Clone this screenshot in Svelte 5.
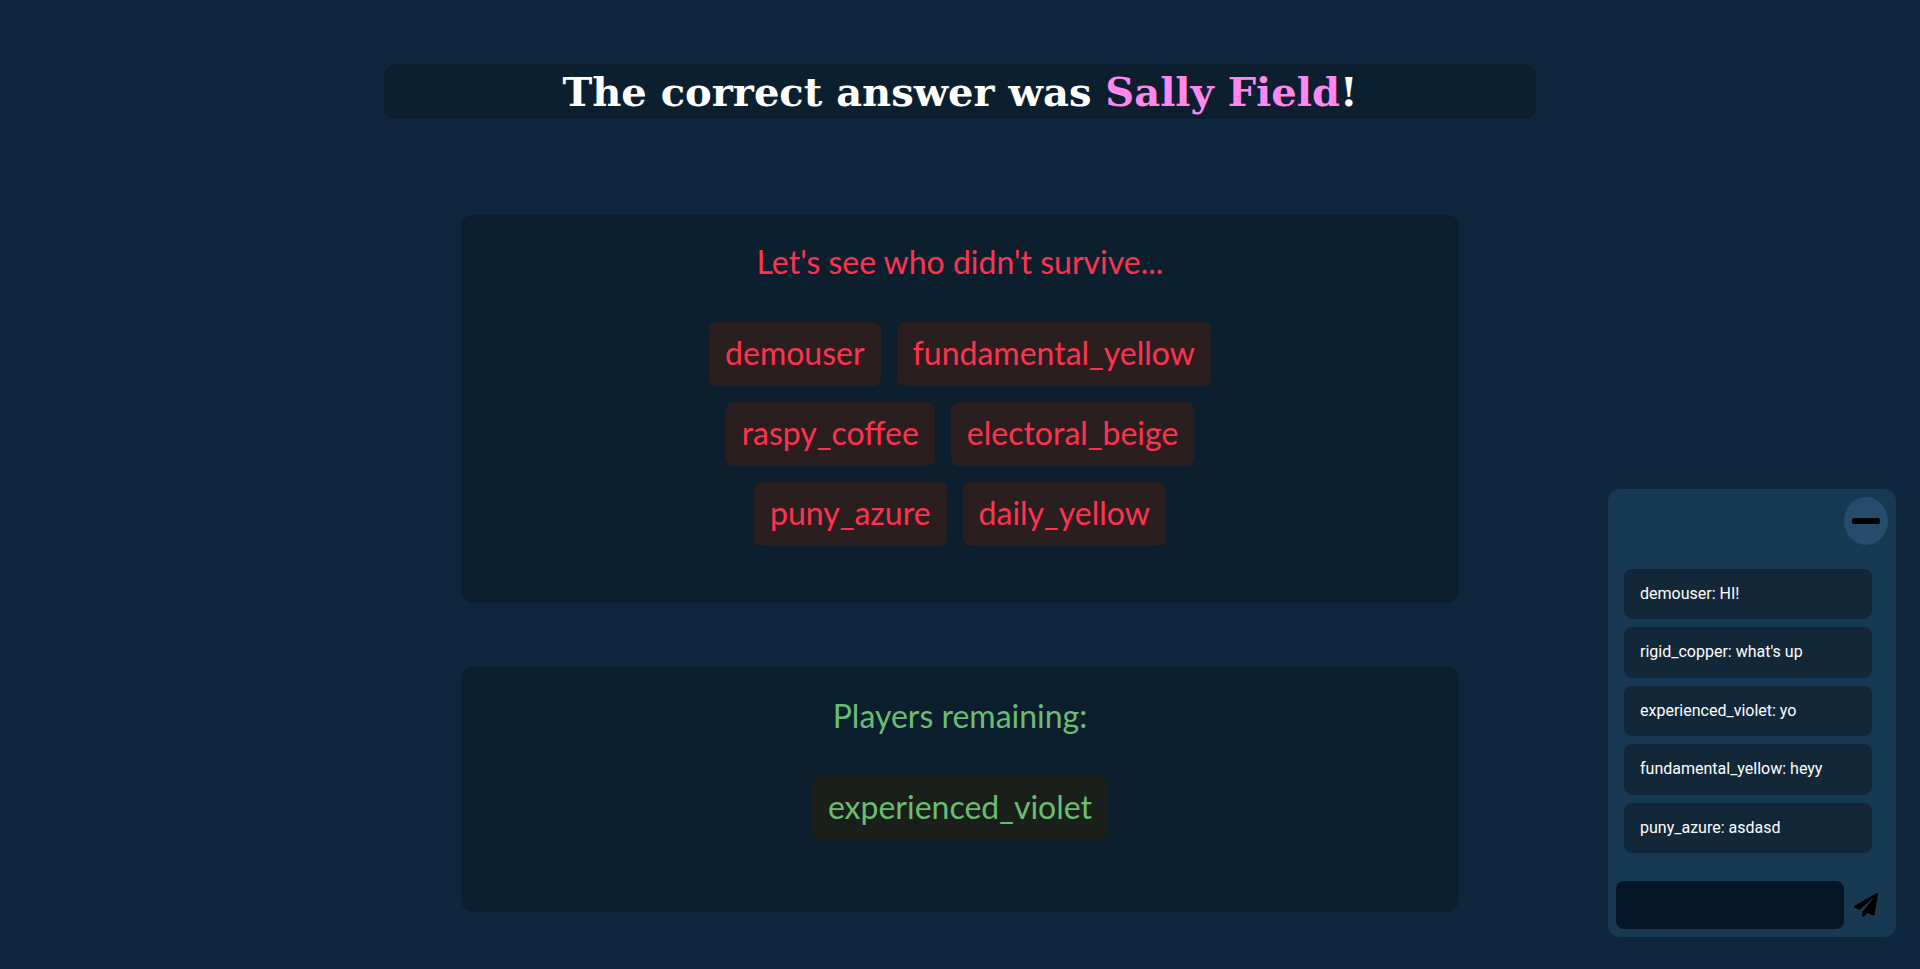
<script>
  const eliminated = ['demouser', 'fundamental_yellow', 'raspy_coffee', 'electoral_beige', 'puny_azure', 'daily_yellow'];
  const remaining = ['experienced_violet'];
  const messages = [
    { from: 'demouser', text: 'HI!' },
    { from: 'rigid_copper', text: "what's up" },
    { from: 'experienced_violet', text: 'yo' },
    { from: 'fundamental_yellow', text: 'heyy' },
    { from: 'puny_azure', text: 'asdasd' }
  ];
</script>

<main>
  <h1>The correct answer was <span>Sally Field</span>!</h1>

  <section class="out">
    <h2>Let's see who didn't survive...</h2>
    <ul>
      {#each eliminated as name}<li>{name}</li>{/each}
    </ul>
  </section>

  <section class="in">
    <h2>Players remaining:</h2>
    <ul>
      {#each remaining as name}<li>{name}</li>{/each}
    </ul>
  </section>
</main>

<aside>
  <button class="minimize" aria-label="Minimize chat">
    <svg viewBox="0 0 448 512" width="28" height="32" aria-hidden="true"><path d="M416 208H32c-17.67 0-32 14.33-32 32v32c0 17.67 14.33 32 32 32h384c17.67 0 32-14.33 32-32v-32c0-17.67-14.33-32-32-32z" /></svg>
  </button>
  <div class="messages">
    {#each messages as m}<p>{m.from}: {m.text}</p>{/each}
  </div>
  <form onsubmit={(e) => e.preventDefault()}>
    <input type="text" aria-label="Message" />
    <button class="send" aria-label="Send">
      <svg viewBox="0 0 512 512" width="24" height="24" aria-hidden="true"><path d="M476 3.2L12.5 270.6c-18.1 10.4-15.8 35.6 2.2 43.2L121 358.4l287.3-253.2c5.5-4.9 13.3 2.6 8.6 8.3L176 407v80.5c0 23.6 28.5 32.9 42.5 15.8L282 426l124.6 52.2c14.2 6 30.4-2.9 33-18.2l72-432C515 7.8 493.3-6.8 476 3.2z" /></svg>
    </button>
  </form>
</aside>

<style>
  :global(body) {
    background: #0f273d;
  }
  main {
    min-height: 100vh;
    box-sizing: border-box;
    padding: 64px 0 56px;
    display: flex;
    flex-direction: column;
    align-items: center;
    font-family: Lato, sans-serif;
  }
  h1 {
    width: 60%;
    margin: 0 0 96px;
    border-radius: 12px;
    background: #0c1f2f;
    color: #fff;
    font: bold 40px/55px 'DejaVu Serif', serif;
    text-align: center;
  }
  h1 span {
    color: #ff88ee;
  }
  section {
    width: 52%;
    border-radius: 12px;
    background: #0c1f2f;
    display: flex;
    flex-direction: column;
    align-items: center;
    font-size: 32px;
    line-height: 40px;
  }
  .out {
    padding: 28px 0 57px;
    margin-bottom: 64px;
    box-sizing: border-box;
    color: #ff334f;
  }
  .in {
    padding: 29px 0 72px;
    box-sizing: border-box;
    color: #6bbd73;
  }
  h2 {
    margin: 0 0 40px;
    font-size: 32px;
    font-weight: 400;
  }
  ul {
    list-style: none;
    margin: 0;
    padding: 0;
    width: 60%;
    display: flex;
    flex-wrap: wrap;
    justify-content: center;
    gap: 16px;
  }
  li {
    padding: 11px 16px 13px;
    border-radius: 8px;
  }
  .out {
    padding: 27px 0 57px;
  }
  .out li {
    background: #2a1e1f;
  }
  .in li {
    background: #1a2019;
  }
  aside {
    position: fixed;
    right: 24px;
    bottom: 32px;
    width: 288px;
    box-sizing: border-box;
    padding: 8px;
    border-radius: 12px;
    background: #183952;
    display: flex;
    flex-direction: column;
    font-family: Roboto, sans-serif;
  }
  button {
    border: 0;
    background: none;
    cursor: pointer;
    color: #000;
  }
  svg {
    display: block;
    fill: currentColor;
  }
  .minimize {
    align-self: flex-end;
    padding: 8px;
    border-radius: 50%;
    background: #274b6a;
  }
  .messages {
    display: flex;
    flex-direction: column;
    gap: 8px;
    margin: 24px 16px 28px 8px;
  }
  p {
    margin: 0;
    padding: 16px;
    border-radius: 8px;
    background: #122839;
    color: #fff;
    font-size: 16px;
    line-height: 1.15;
  }
  form {
    display: flex;
    align-items: center;
  }
  input {
    flex: 1;
    min-width: 0;
    height: 48px;
    box-sizing: border-box;
    padding: 0 16px;
    border: 0;
    border-radius: 8px;
    background: #051726;
    color: #fff;
    font: 16px Roboto, sans-serif;
  }
  .send {
    padding: 12px 10px;
  }
</style>
